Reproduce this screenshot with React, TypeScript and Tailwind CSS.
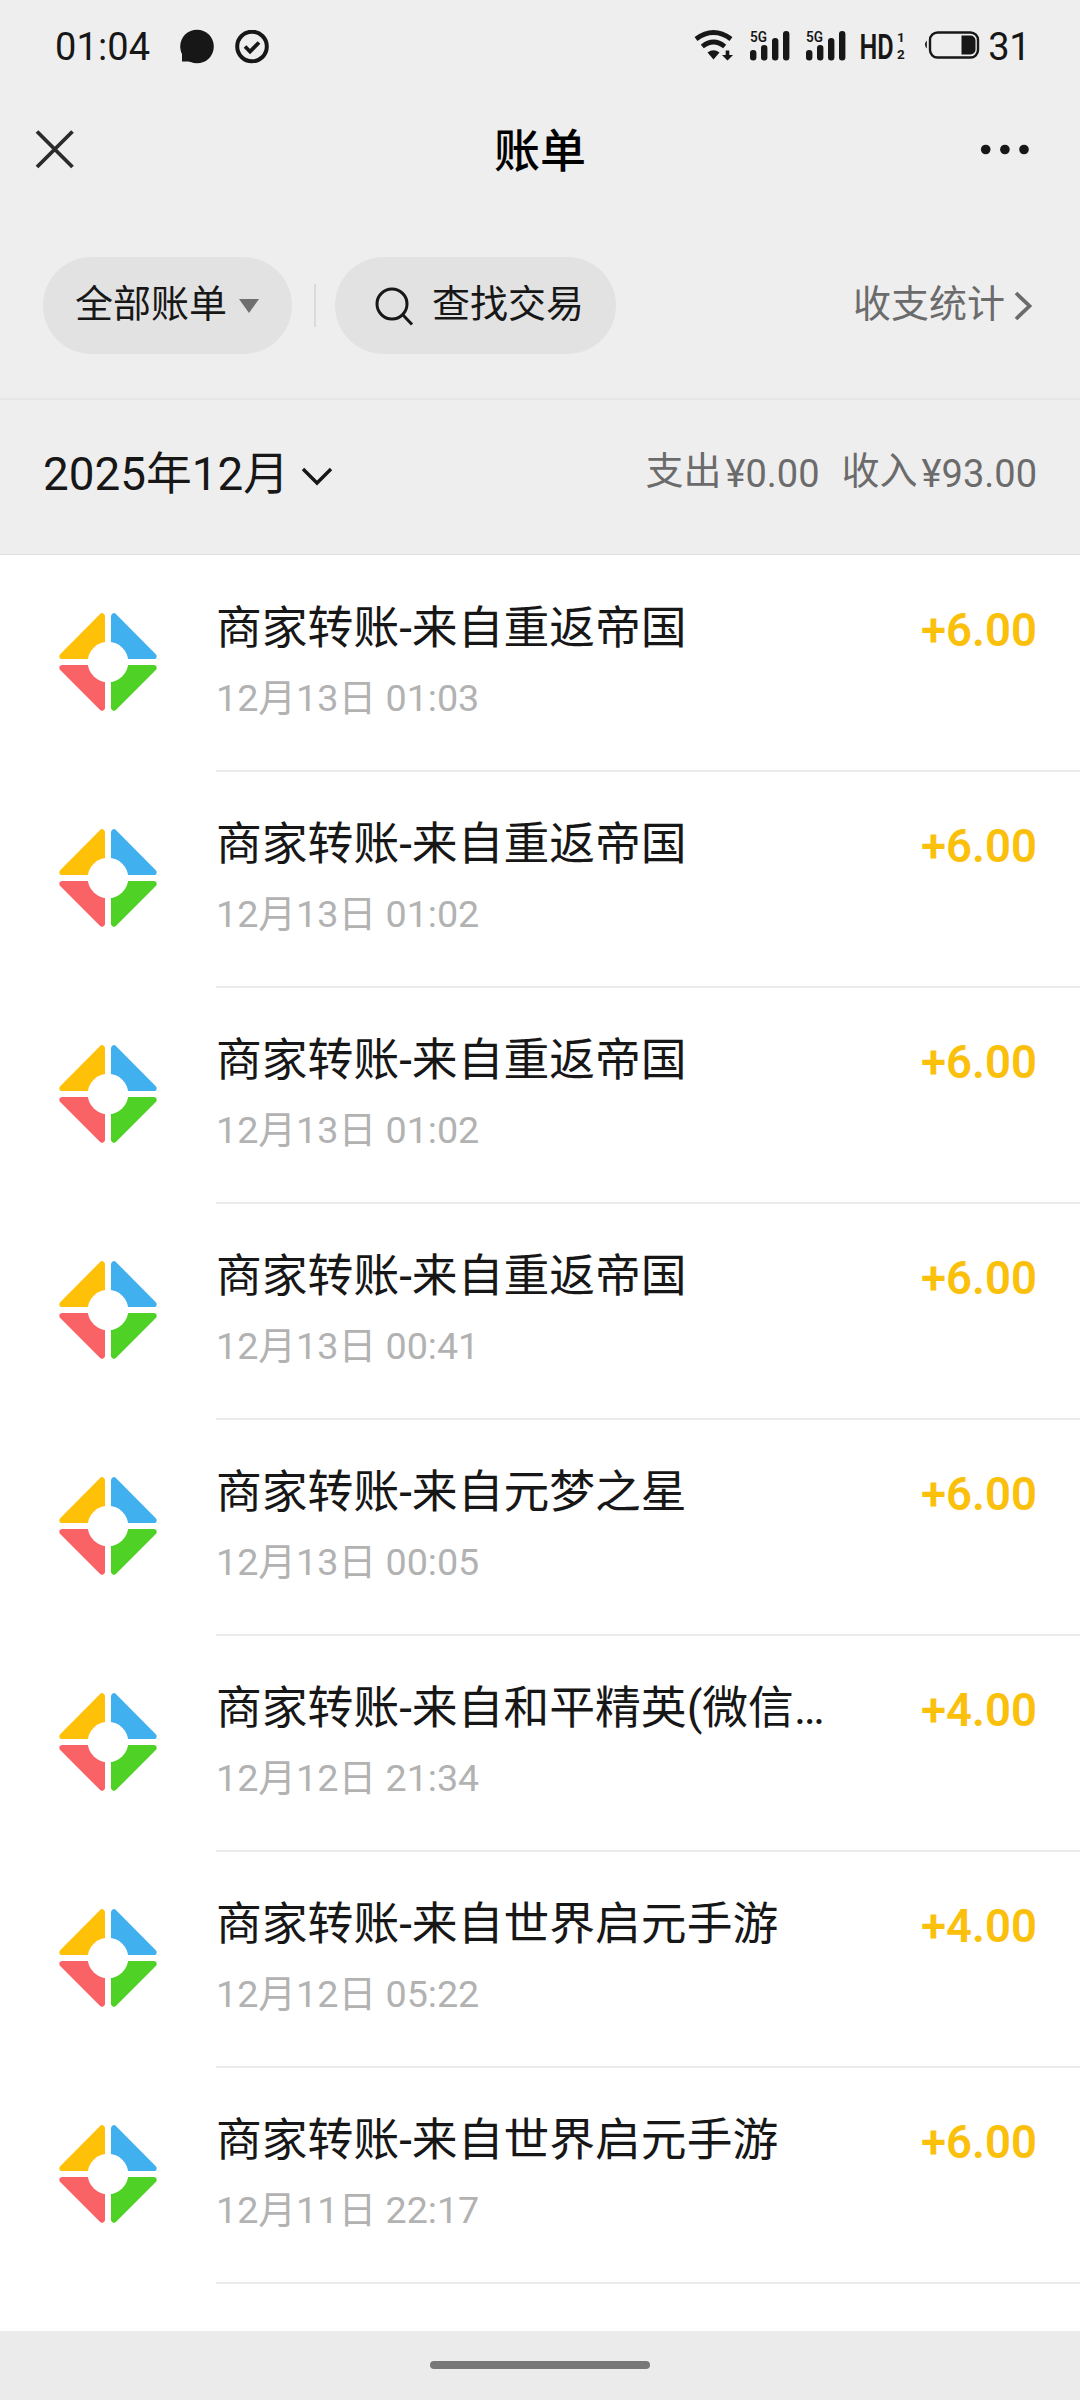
import { useState } from "react";

type Bill = {
  id: number;
  title: string;
  time: string;
  amount: string;
};

const BILLS: Bill[] = [
  { id: 1, title: "商家转账-来自重返帝国", time: "12月13日 01:03", amount: "+6.00" },
  { id: 2, title: "商家转账-来自重返帝国", time: "12月13日 01:02", amount: "+6.00" },
  { id: 3, title: "商家转账-来自重返帝国", time: "12月13日 01:02", amount: "+6.00" },
  { id: 4, title: "商家转账-来自重返帝国", time: "12月13日 00:41", amount: "+6.00" },
  { id: 5, title: "商家转账-来自元梦之星", time: "12月13日 00:05", amount: "+6.00" },
  { id: 6, title: "商家转账-来自和平精英(微信…", time: "12月12日 21:34", amount: "+4.00" },
  { id: 7, title: "商家转账-来自世界启元手游", time: "12月12日 05:22", amount: "+4.00" },
  { id: 8, title: "商家转账-来自世界启元手游", time: "12月11日 22:17", amount: "+6.00" },
];

const WifiIcon = () => (
  <svg width="40" height="32" viewBox="0 0 40 32" fill="none">
    <path d="M2 9Q19.500 -4 37 9" stroke="#171717" strokeWidth="4.800" />
    <path d="M8.300 16.500Q19.500 7.500 30.700 16.500" stroke="#171717" strokeWidth="4.800" />
    <path d="M13.500 22.500Q19.500 18 25.500 22.500L19.500 29.500Z" fill="#171717" />
    <path d="M31.700 20.500h3.600v4.500h3.700l-5.500 5.500-5.500-5.500h3.700z" fill="#171717" />
  </svg>
);

const SignalIcon = () => (
  <svg width="40" height="32" viewBox="0 0 40 32" fill="#171717" className="overflow-visible">
    <text
      x="0"
      y="11.800"
      fontSize="15"
      fontWeight="600"
      textLength="17"
      lengthAdjust="spacingAndGlyphs"
      className="font-[Roboto,sans-serif]"
    >
      5G
    </text>
    <rect x="0" y="20" width="6.400" height="10.500" rx="3" />
    <rect x="11" y="15" width="6.400" height="15.500" rx="3" />
    <rect x="22" y="8" width="6.400" height="22.500" rx="3" />
    <rect x="33" y="1" width="6.400" height="29.500" rx="3" />
  </svg>
);

const HdIcon = () => (
  <svg width="46" height="32" viewBox="0 0 46 32" fill="#171717" className="overflow-visible font-[Roboto,sans-serif]">
    <text transform="translate(-1.500 28.500) scale(0.720 1)" fontSize="35" fontWeight="600">
      HD
    </text>
    <text x="36" y="12.300" fontSize="13.500" fontWeight="700">
      1
    </text>
    <text x="36" y="28.500" fontSize="13.500" fontWeight="700">
      2
    </text>
  </svg>
);

const BatteryIcon = () => (
  <svg width="56" height="32" viewBox="0 0 56 32" fill="none">
    <path d="M2.800 10.500Q-.8 14.500 2.800 18.500Z" fill="#171717" />
    <rect x="6" y="2.500" width="48" height="25" rx="7.500" stroke="#171717" strokeWidth="2.400" />
    <path d="M37.500 5.500h9a5 5 0 0 1 5 5v9a5 5 0 0 1-5 5h-9z" fill="#171717" />
  </svg>
);

const StatusBar = () => (
  <div className="flex h-[94px] items-center pl-[55px] pr-[50px]">
    <span className="text-[38px] leading-none tracking-[0.1px]">01:04</span>
    <svg width="36" height="36" viewBox="0 0 36 36" fill="#171717" className="ml-[29px]">
      <circle cx="18" cy="17.500" r="16.800" />
      <path d="M3 20v12.500h12z" />
    </svg>
    <svg width="34" height="34" viewBox="0 0 34 34" fill="none" stroke="#171717" className="ml-[20px]">
      <circle cx="17" cy="16.500" r="14.800" strokeWidth="4" />
      <path d="M10 16.500l5 5 9-9" strokeWidth="3.800" />
    </svg>
    <div className="ml-auto flex items-center">
      <div className="flex items-center pb-[2px]">
        <WifiIcon />
        <div className="ml-[16px]">
          <SignalIcon />
        </div>
        <div className="ml-[16px]">
          <SignalIcon />
        </div>
        <div className="ml-[15px]">
          <HdIcon />
        </div>
        <div className="ml-[17px]">
          <BatteryIcon />
        </div>
      </div>
      <span className="ml-[8px] text-[38px] leading-none tracking-[-0.5px]">31</span>
    </div>
  </div>
);

const TitleBar = () => (
  <header className="grid h-[110px] grid-cols-3 items-center pl-[35px] pr-[50px]">
    <button aria-label="关闭" className="justify-self-start">
      <svg width="40" height="40" viewBox="0 0 40 40" stroke="#2a2a2a" strokeWidth="3.800">
        <path d="M2 2.500l35.500 35.500M37.500 2.500L2 38" />
      </svg>
    </button>
    <h1 className="justify-self-center pl-[15px] pt-[3px] text-[46px] leading-none font-medium text-black">账单</h1>
    <button aria-label="更多" className="justify-self-end">
      <svg width="50" height="12" viewBox="0 0 50 12" fill="#171717">
        <circle cx="5.700" cy="6.500" r="4.800" />
        <circle cx="24.900" cy="6.500" r="4.800" />
        <circle cx="44" cy="6.500" r="4.800" />
      </svg>
    </button>
  </header>
);

const FilterBar = () => (
  <div className="flex h-[196px] items-start border-b-2 border-[#e6e6e6] pl-[43px] pr-[46px] pt-[53px]">
    <button className="flex h-[97px] w-[249px] items-center rounded-full bg-[#e2e2e2] pb-[4px] pl-[32px]">
      <span className="text-[38px] leading-none">全部账单</span>
      <svg width="20" height="14" viewBox="0 0 20 14" fill="#6f6f6f" className="ml-[12px] mt-[4px]">
        <path d="M0 0h20L10 14z" />
      </svg>
    </button>
    <div className="ml-[22px] mr-[19px] mt-[27px] h-[43px] w-[2px] bg-[#dadada]" />
    <button className="flex h-[97px] w-[281px] items-center rounded-full bg-[#e2e2e2] pb-[4px] pl-[39px]">
      <svg width="42" height="42" viewBox="0 0 42 42" fill="none" stroke="#171717" strokeWidth="3" className="mt-[5px]">
        <circle cx="18" cy="19" r="15" />
        <path d="M28.500 29.500L38 39.500" />
      </svg>
      <span className="ml-[16px] text-[38px] leading-none">查找交易</span>
    </button>
    <button className="ml-auto flex h-[97px] items-center pb-[4px] text-[#6b6b6b]">
      <span className="text-[38px] leading-none">收支统计</span>
      <svg
        width="20"
        height="30"
        viewBox="0 0 20 30"
        fill="none"
        stroke="currentColor"
        strokeWidth="3.800"
        className="ml-[9px] mt-[4px]"
      >
        <path d="M2 2l13.500 13L2 28" />
      </svg>
    </button>
  </div>
);

const MonthHeader = () => (
  <div className="flex h-[155px] items-start justify-between border-b border-[#e0e0e0] pl-[43px] pr-[43px] pt-[50px]">
    <button className="flex h-[48px] items-center">
      <span className="mt-[2px] text-[45.800px] leading-none">2025年12月</span>
      <svg width="32" height="20" viewBox="0 0 32 20" fill="none" stroke="#171717" strokeWidth="3.400" className="ml-[12px] mt-[3px]">
        <path d="M2 3l14 14L30 3" />
      </svg>
    </button>
    <div className="flex h-[44px] items-center text-[38px] leading-none text-[#6b6b6b]">
      <span className="-mt-[3px]">支出</span>
      <span className="ml-[4px] mt-[4px]">¥0.00</span>
      <span className="-mt-[3px] ml-[22px]">收入</span>
      <span className="ml-[4px] mt-[4px]">¥93.00</span>
    </div>
  </div>
);

// four rounded triangles around a white circle
const MerchantLogo = () => (
  <svg width="98" height="98" viewBox="0 0 98 98" strokeWidth="6" strokeLinejoin="round">
    <path d="M43 3.300V43.300H3.300z" fill="#ffc107" stroke="#ffc107" />
    <path d="M55 3.300V43.300H94.700z" fill="#40b0ef" stroke="#40b0ef" />
    <path d="M43 94.700V55H3.300z" fill="#fa6365" stroke="#fa6365" />
    <path d="M55 94.700V55H94.700z" fill="#4fd126" stroke="#4fd126" />
    <circle cx="49" cy="49" r="20.300" fill="#fff" />
    <path d="M49 0V98M0 49H98" stroke="#fff" />
  </svg>
);

const BillRow = ({ bill }: { bill: Bill }) => (
  <li className="flex h-[216px] items-start pl-[59px]">
    <div className="mt-[57px]">
      <MerchantLogo />
    </div>
    <div className="ml-[59px] flex h-full flex-1 justify-between border-b-2 border-[#ebebeb] pr-[43px] pt-[49px]">
      <div>
        <div className="text-[45.800px] leading-[48px]">{bill.title}</div>
        <div className="mt-[23px] text-[37.700px] leading-[44px] text-[#b2b2b2]">{bill.time}</div>
      </div>
      <span className="mt-[2px] text-[45.500px] leading-[48px] font-semibold text-[#fbc00c]">{bill.amount}</span>
    </div>
  </li>
);

const App = () => {
  const [bills] = useState<Bill[]>(BILLS);

  return (
    <div className="flex h-[2400px] w-[1080px] flex-col overflow-hidden bg-[#eeeeee] font-[Roboto,'Noto_Sans_CJK_SC',sans-serif] text-[#171717]">
      <StatusBar />
      <TitleBar />
      <FilterBar />
      <MonthHeader />
      <main className="flex-1 bg-white pt-px">
        <ul>
          {bills.map((bill) => (
            <BillRow key={bill.id} bill={bill} />
          ))}
        </ul>
      </main>
      <footer className="flex h-[69px] justify-center bg-[#ebebeb] pt-[30px]">
        <div className="h-[8px] w-[220px] rounded-full bg-[#777777]" />
      </footer>
    </div>
  );
};

export default App;
